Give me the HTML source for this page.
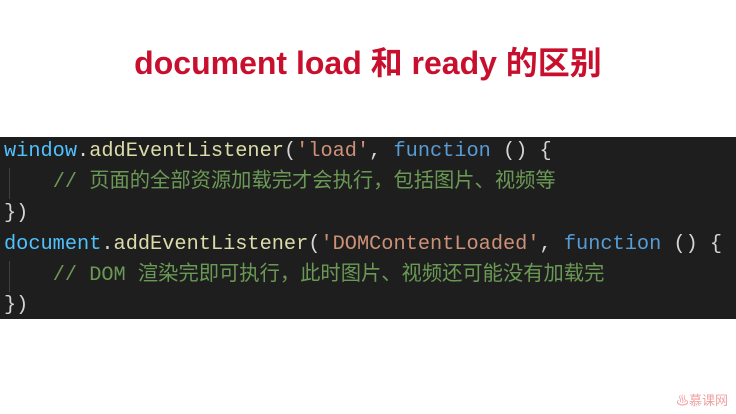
<html><head><style>
body{margin:0;width:736px;height:414px;background:#fff;position:relative;overflow:hidden;font-family:"Liberation Sans","Noto Sans CJK SC",sans-serif}
h1{position:absolute;top:38px;left:0;width:736px;text-align:center;margin:0;font-size:32px;font-weight:bold;color:#c8102e}
.code{position:absolute;top:137px;left:0;width:736px;height:182px;background:#1e1e1e;font-family:"Liberation Mono","Noto Sans CJK SC",monospace;font-size:20.3px;color:#d4d4d4}
.l{position:absolute;left:4px;height:31px;line-height:31px;white-space:pre}
.v{color:#4fc1ff}.f{color:#dcdcaa}.s{color:#ce9178}.k{color:#569cd6}.c{color:#6a9955}
.g{position:absolute;left:9px;width:1px;background:#404040}
.logo{position:absolute;right:8px;bottom:5px;font-size:13px;color:#f0a0a0}
</style></head><body>
<h1>document load 和 ready 的区别</h1>
<div class="code">
<div class="g" style="top:31px;height:31px"></div>
<div class="g" style="top:124px;height:31px"></div>
<div class="l" style="top:-1px"><span class="v">window</span>.<span class="f">addEventListener</span>(<span class="s">'load'</span>, <span class="k">function</span> () {</div>
<div class="l" style="top:30px">    <span class="c">// 页面的全部资源加载完才会执行，包括图片、视频等</span></div>
<div class="l" style="top:61px">})</div>
<div class="l" style="top:92px"><span class="v">document</span>.<span class="f">addEventListener</span>(<span class="s">'DOMContentLoaded'</span>, <span class="k">function</span> () {</div>
<div class="l" style="top:123px">    <span class="c">// DOM 渲染完即可执行，此时图片、视频还可能没有加载完</span></div>
<div class="l" style="top:153px">})</div>
</div>
<div class="logo">♨慕课网</div>
</body></html>
